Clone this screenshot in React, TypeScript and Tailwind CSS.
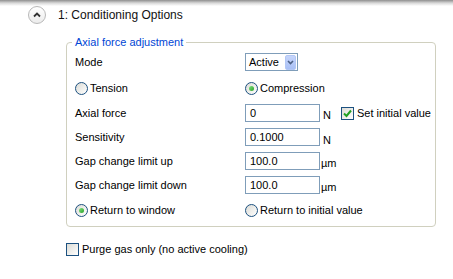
import React from "react";

const font = { fontFamily: '"Liberation Sans", Arial, sans-serif' };

function Radio({ checked, label }: { checked?: boolean; label: string }) {
  return (
    <div className="flex items-center h-[18px]">
      <span className="w-[13px] h-[13px] rounded-full border border-[#1c5180] bg-gradient-to-br from-[#dcdcd6] to-white flex items-center justify-center shrink-0">
        {checked && (
          <span className="w-[5px] h-[5px] rounded-full bg-gradient-to-br from-[#7ee27e] to-[#21a121]" />
        )}
      </span>
      <span className="ml-[2px]">{label}</span>
    </div>
  );
}

function Check({ checked, label }: { checked?: boolean; label: string }) {
  return (
    <div className="flex items-center">
      <span className="w-[13px] h-[13px] border border-[#1c5180] bg-gradient-to-br from-[#dcdcd6] to-white flex items-center justify-center shrink-0">
        {checked && (
          <svg width="9" height="9" viewBox="0 0 9 9">
            <path d="M1 4.5 L3.5 7 L8 1.5" stroke="#21a121" strokeWidth="2" fill="none" />
          </svg>
        )}
      </span>
      <span className="ml-[3px]">{label}</span>
    </div>
  );
}

function Input({ value }: { value: string }) {
  return (
    <div className="w-[75px] h-[18px] border border-[#7f9db9] bg-white flex items-center pl-[4px] shrink-0">
      {value}
    </div>
  );
}

function Row({ label, children, className = "" }: { label: React.ReactNode; children: React.ReactNode; className?: string }) {
  return (
    <div className={"flex items-center h-[24px] " + className}>
      <div className="w-[170px] shrink-0">{label}</div>
      <div className="flex items-center">{children}</div>
    </div>
  );
}

export default function App() {
  return (
    <div className="w-[453px] h-[279px] bg-white overflow-hidden text-[11px] text-black" style={font}>
      <div className="h-[6px] bg-gradient-to-b from-[#8f8f8f] via-[#d8d8d8] to-white" />
      <div className="flex items-center pl-[28px] h-[17px]">
        <span className="w-[18px] h-[18px] rounded-full border border-[#b8b8b8] bg-gradient-to-b from-white to-[#ececec] flex items-center justify-center">
          <svg width="8" height="6" viewBox="0 0 8 6">
            <path d="M1 4.5 L4 1.5 L7 4.5" stroke="#333" strokeWidth="1.8" fill="none" />
          </svg>
        </span>
        <span className="ml-[12px] text-[12px] text-[#111]">1: Conditioning Options</span>
      </div>
      <fieldset className="ml-[66px] w-[370px] mt-[13px] border border-[#d0d0bf] rounded-[4px] pl-[8px] pr-[4px] pb-[4px] pt-[1px]">
        <legend className="ml-[-3px] px-[3px] text-[#0046d5] text-[11px] leading-[13px]">Axial force adjustment</legend>
        <Row label="Mode">
          <div className="w-[53px] h-[18px] border border-[#7f9db9] bg-white flex items-center justify-between pl-[3px] pr-[1px]">
            <span>Active</span>
            <span className="w-[11px] h-[15px] rounded-[2px] bg-gradient-to-b from-[#c6d5fb] to-[#a9c0f5] border border-[#b2c7f5] flex items-center justify-center">
              <svg width="7" height="5" viewBox="0 0 7 5">
                <path d="M1 1 L3.5 3.5 L6 1" stroke="#4d6185" strokeWidth="1.6" fill="none" />
              </svg>
            </span>
          </div>
        </Row>
        <Row className="mt-[2px]" label={<Radio label="Tension" />}>
          <Radio checked label="Compression" />
        </Row>
        <Row className="mt-[1px]" label="Axial force">
          <Input value="0" />
          <span className="ml-[3px] translate-y-[2px]">N</span>
          <span className="ml-[10px]"><Check checked label="Set initial value" /></span>
        </Row>
        <Row label="Sensitivity">
          <Input value="0.1000" />
          <span className="ml-[3px] translate-y-[3px]">N</span>
        </Row>
        <Row label="Gap change limit up">
          <Input value="100.0" />
          <span className="ml-[1px] translate-y-[2px]">µm</span>
        </Row>
        <Row label="Gap change limit down">
          <Input value="100.0" />
          <span className="ml-[1px] translate-y-[2px]">µm</span>
        </Row>
        <Row className="mt-[1px]" label={<Radio checked label="Return to window" />}>
          <Radio label="Return to initial value" />
        </Row>
      </fieldset>
      <div className="ml-[66px] mt-[14px]">
        <Check label="Purge gas only (no active cooling)" />
      </div>
    </div>
  );
}
